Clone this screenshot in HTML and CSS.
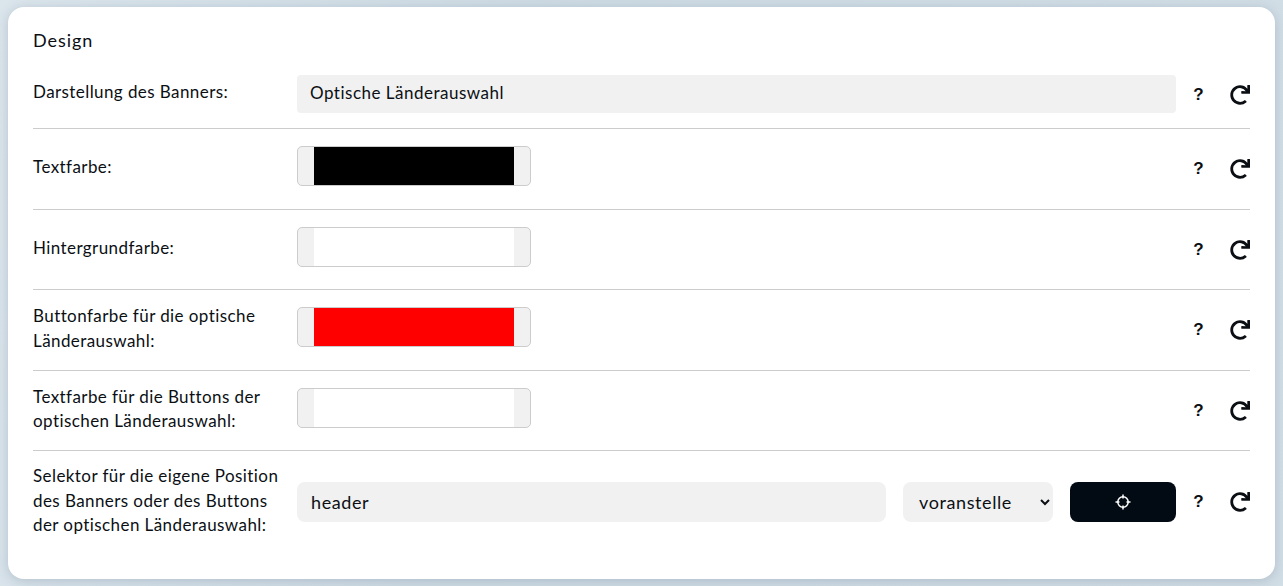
FILE: index.html
```html
<!DOCTYPE html>
<html lang="de">
<head>
    <meta charset="UTF-8">
    <meta name="viewport" content="width=device-width, initial-scale=1.0">
    <title>Design</title>
    <link rel="stylesheet" href="styles.css">
</head>
<body>
    <svg class="icon-defs" width="0" height="0">
        <symbol id="redo" viewBox="0 0 512 512">
            <path d="M500.33 0h-47.41a12 12 0 0 0-12 12.57l4 82.76A247.42 247.42 0 0 0 256 8C119.34 8 8.9 119.53 8 256.19 7.1 393.07 118.1 504 256 504a247.1 247.1 0 0 0 166.18-63.91 12 12 0 0 0 .48-17.43l-34-34a12 12 0 0 0-16.38-.55A176 176 0 1 1 402.1 157.8l-101.53-4.87a12 12 0 0 0-12.57 12v47.41a12 12 0 0 0 12 12h200.33a12 12 0 0 0 12-12V12a12 12 0 0 0-12-12z"/>
        </symbol>
    </svg>

    <section class="card">
        <h2 class="card-title">Design</h2>

        <div class="row row-first">
            <label class="row-label">Darstellung des Banners:</label>
            <div class="row-field"><div class="readonly">Optische Länderauswahl</div></div>
            <span class="help">?</span>
            <button class="reset"><svg><use href="#redo"/></svg></button>
        </div>

        <div class="row row-color">
            <label class="row-label">Textfarbe:</label>
            <div class="row-field"><input class="swatch" type="color" value="#000000"></div>
            <span class="help">?</span>
            <button class="reset"><svg><use href="#redo"/></svg></button>
        </div>

        <div class="row row-color">
            <label class="row-label">Hintergrundfarbe:</label>
            <div class="row-field"><input class="swatch" type="color" value="#ffffff"></div>
            <span class="help">?</span>
            <button class="reset"><svg><use href="#redo"/></svg></button>
        </div>

        <div class="row row-color">
            <label class="row-label">Buttonfarbe für die optische Länderauswahl:</label>
            <div class="row-field"><input class="swatch" type="color" value="#ff0000"></div>
            <span class="help">?</span>
            <button class="reset"><svg><use href="#redo"/></svg></button>
        </div>

        <div class="row row-color">
            <label class="row-label">Textfarbe für die Buttons der optischen Länderauswahl:</label>
            <div class="row-field"><input class="swatch" type="color" value="#ffffff"></div>
            <span class="help">?</span>
            <button class="reset"><svg><use href="#redo"/></svg></button>
        </div>

        <div class="row row-last">
            <label class="row-label">Selektor für die eigene Position des Banners oder des Buttons der optischen Länderauswahl:</label>
            <div class="row-field selector-field">
                <input class="text-input" type="text" value="header">
                <select class="select"><option>voranstelle</option></select>
                <button class="picker">
                    <svg width="16" height="16" viewBox="0 0 16 16" fill="none" stroke="#fff">
                        <circle cx="8" cy="8" r="5.2" stroke-width="1.5"/>
                        <path d="M8 0.5v4M8 11.5v4M0.5 8h4M11.5 8h4" stroke-width="1.5"/>
                    </svg>
                </button>
            </div>
            <span class="help">?</span>
            <button class="reset"><svg><use href="#redo"/></svg></button>
        </div>
    </section>
</body>
</html>
```

FILE: styles.css
```css
* {
    box-sizing: border-box;
}

body {
    margin: 0;
    height: 586px;
    padding: 7px 8px;
    overflow: hidden;
    background: linear-gradient(100deg, #dbe5ec 0%, #cedbe4 40%, #d2dee6 100%);
    font-family: Lato, "Noto Sans", sans-serif;
    font-size: 17px;
    letter-spacing: 0.5px;
    color: #0b0f14;
}

.icon-defs {
    position: absolute;
}

.card {
    height: 572px;
    padding: 20px 25px 0;
    background: #fff;
    border-radius: 16px;
    box-shadow: 0 2px 12px rgba(70, 95, 120, 0.25);
}

.card-title {
    margin: 0 0 22px;
    font-size: 18px;
    line-height: 26px;
    letter-spacing: 0.95px;
    font-weight: 400;
}

.row {
    display: grid;
    grid-template-columns: 264px 1fr 45px 29px;
    align-items: center;
    padding: 17px 0 22.5px;
    border-bottom: 1px solid #ccc;
}

.row-first {
    padding: 0 0 15px;
}

.row-first .row-label {
    margin-top: -4px;
}

.row-first .help,
.row-first .reset {
    margin-top: 2px;
}

.row-last {
    padding: 15px 0 0;
    border-bottom: none;
}

.row-last .row-label {
    margin-top: -2px;
}

.row-label {
    line-height: 24.5px;
    padding-right: 8px;
    letter-spacing: 0.42px;
}

.row-color .row-label {
    margin: -5px 0 -8px;
}

.row-color .help,
.row-color .reset {
    margin-top: 6px;
}

.readonly {
    height: 38px;
    padding: 0 13px;
    line-height: 35px;
    background: #f1f1f1;
    border-radius: 4px;
}

.swatch {
    display: block;
    width: 234px;
    height: 40px;
    padding: 0 16px;
    background: #f1f1f1;
    border: 1px solid #ccc;
    border-radius: 5px;
}

.swatch::-webkit-color-swatch-wrapper {
    padding: 0;
}

.swatch::-webkit-color-swatch {
    border: none;
    border-radius: 0;
}

.selector-field {
    display: grid;
    grid-template-columns: 589px 150px 106px;
    justify-content: space-between;
}

.text-input,
.select,
.picker {
    height: 40px;
    border: none;
    border-radius: 8px;
    font: inherit;
    font-size: 18px;
    letter-spacing: 0.6px;
    color: inherit;
}

.text-input {
    width: 100%;
    padding: 0 14px;
    background: #f1f1f1;
}

.select {
    padding: 0 0 0 12px;
    background: #f1f1f1;
}

.picker {
    display: flex;
    align-items: center;
    justify-content: center;
    padding: 0;
    background: #020a13;
}

.help {
    text-align: center;
    font-family: "Liberation Sans", sans-serif;
    font-size: 17px;
    font-weight: 700;
    letter-spacing: 0;
}

.reset {
    justify-self: end;
    width: 20px;
    height: 20px;
    padding: 0;
    border: none;
    background: none;
    fill: #0b0f14;
}

.reset svg {
    display: block;
    width: 20px;
    height: 20px;
}
```
